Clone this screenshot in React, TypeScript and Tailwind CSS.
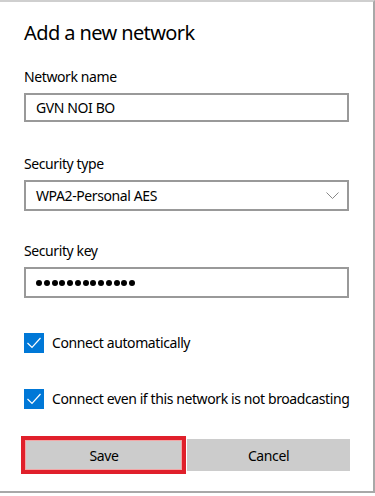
import { useState } from 'react';

function Check({ checked, onToggle }: { checked: boolean; onToggle: () => void }) {
  return (
    <button
      onClick={onToggle}
      className={`w-5 h-5 shrink-0 flex items-center justify-center ${checked ? 'bg-[#0078d7]' : 'border-2 border-[#333]'}`}
    >
      {checked && (
        <svg width="20" height="20" viewBox="0 0 20 20" fill="none">
          <path d="M3.5 10 L8 14.5 L16.5 5" stroke="#fff" strokeWidth="1.2" />
        </svg>
      )}
    </button>
  );
}

export default function App() {
  const [name, setName] = useState('GVN NOI BO');
  const [auto, setAuto] = useState(true);
  const [hidden, setHidden] = useState(true);

  return (
    <div
      className="w-[375px] h-[493px] bg-white border-t-2 border-t-[#cfcfcf] border-r-2 border-b-2 border-[#a8a8a8] text-black pl-6 text-[14px] tracking-[-0.4px]"
      style={{ fontFamily: '"Noto Sans", "Open Sans", sans-serif' }}
    >
      <h1 className="text-[20px] leading-[28px] mt-[17px] tracking-[-0.6px]">Add a new network</h1>

      <div className="mt-[20px] leading-[20px]">Network name</div>
      <input
        value={name}
        onChange={(e) => setName(e.target.value)}
        className="mt-[6px] w-[325px] h-[29px] border-2 border-[#999] px-[10px] outline-none block"
      />

      <div className="mt-[32px] leading-[20px]">Security type</div>
      <div className="mt-[6px] w-[325px] h-[31px] border-2 border-[#999] flex items-center justify-between pl-[10px] pr-[8px]">
        <span>WPA2-Personal AES</span>
        <svg width="13" height="7" viewBox="0 0 13 7" fill="none">
          <path d="M0.5 0.5 L6.5 6.5 L12.5 0.5" stroke="#888" strokeWidth="1" />
        </svg>
      </div>

      <div className="mt-[30px] leading-[20px]">Security key</div>
      <div className="mt-[6px] w-[325px] h-[31px] border-2 border-[#999] flex items-center pl-[10px] gap-[1.75px]">
        {Array.from({ length: 13 }).map((_, i) => (
          <span key={i} className="w-[6px] h-[6px] rounded-full bg-black" />
        ))}
      </div>

      <div className="mt-[35px] flex items-center gap-2 leading-[20px]">
        <Check checked={auto} onToggle={() => setAuto(!auto)} />
        <span>Connect automatically</span>
      </div>
      <div className="mt-[36px] flex items-center gap-2 leading-[20px]">
        <Check checked={hidden} onToggle={() => setHidden(!hidden)} />
        <span>Connect even if this network is not broadcasting</span>
      </div>

      <div className="mt-[30px] flex items-center gap-[3px]">
        <div className="relative">
          <button className="w-[160px] h-[32px] bg-[#cccccc]">Save</button>
          <div className="absolute -top-[3px] -bottom-[3px] -left-[3px] -right-[2px] border-[4px] border-[#e0202b] shadow-[inset_0_0_0_1px_#f2a6a6] pointer-events-none" />
        </div>
        <button className="w-[163px] h-[32px] bg-[#cccccc]">Cancel</button>
      </div>
    </div>
  );
}
